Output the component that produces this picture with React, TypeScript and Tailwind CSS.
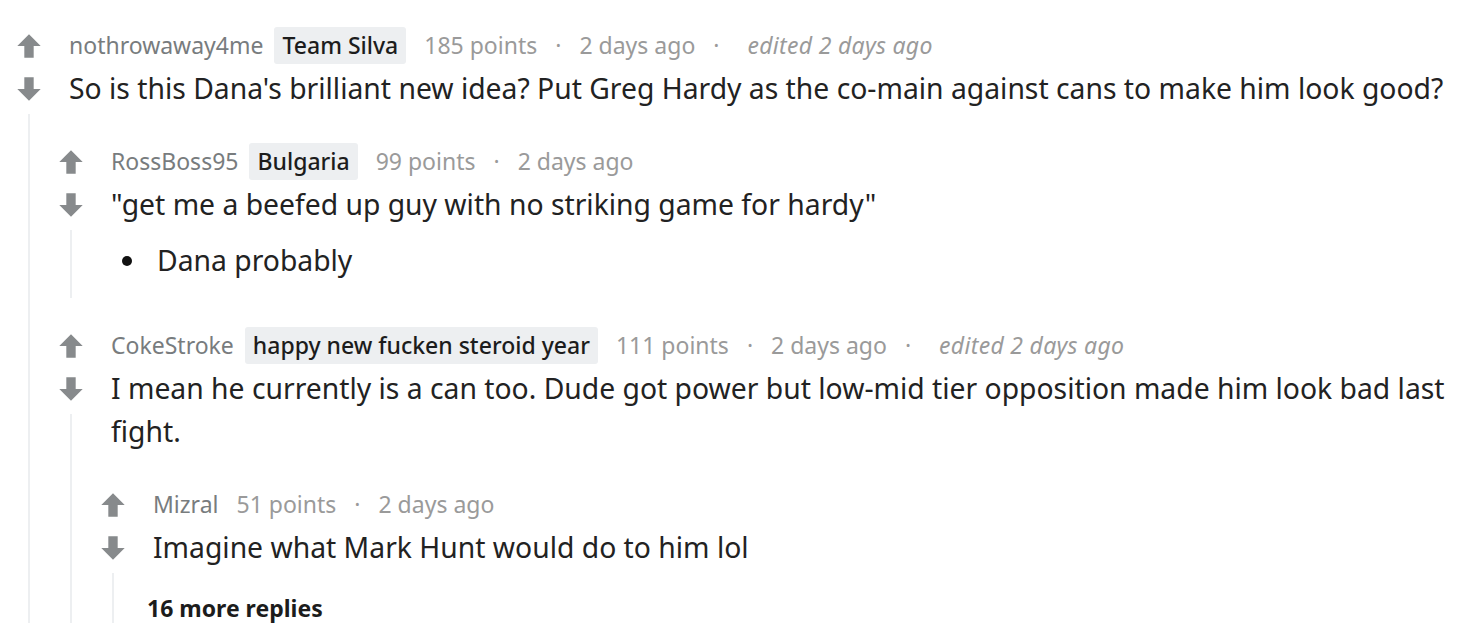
import React from 'react'

interface CommentData {
  author: string
  flair?: string
  points: string
  age: string
  edited?: string
  body: React.ReactNode
  children?: CommentData[]
  more?: string
}

function UpArrow(): React.JSX.Element {
  return (
    <svg width="26" height="26" viewBox="0 0 20 20" className="fill-[#878a8c]">
      <path d="M10 1 L19 10 H13.6 V19 H6.4 V10 H1 Z" />
    </svg>
  )
}

function DownArrow(): React.JSX.Element {
  return (
    <svg width="26" height="26" viewBox="0 0 20 20" className="fill-[#878a8c]">
      <path d="M10 19 L19 10 H13.6 V1 H6.4 V10 H1 Z" />
    </svg>
  )
}

function Meta({ c }: { c: CommentData }): React.JSX.Element {
  return (
    <div className="flex h-[43px] items-center whitespace-nowrap text-[23px] text-[#9a9a9a]">
      <span className="text-[#787c7e]">{c.author}</span>
      {c.flair && (
        <span className="ml-[11px] rounded-[3px] bg-[#edeff1] px-[8px] py-[1px] font-medium text-[#1c1c1c]">
          {c.flair}
        </span>
      )}
      <span className="ml-[18px]">{c.points}</span>
      <span className="mx-[18px]">·</span>
      <span>{c.age}</span>
      {c.edited && (
        <>
          <span className="mx-[18px]">·</span>
          <span className="ml-[10px] italic tracking-[0.3px]">{c.edited}</span>
        </>
      )}
    </div>
  )
}

function Comment({ c }: { c: CommentData }): React.JSX.Element {
  return (
    <div className="flex">
      <div className="flex w-[42px] shrink-0 flex-col items-center">
        <div className="flex h-[43px] items-center">
          <UpArrow />
        </div>
        <div className="flex h-[43px] items-center">
          <DownArrow />
        </div>
        <div className="mt-[4px] w-[2px] flex-1 bg-[#edeff1]" />
      </div>
      <div className="min-w-0 flex-1">
        <div className="pl-[19px]">
          <Meta c={c} />
          <div className="pb-[4px] text-[28.3px] leading-[43px] text-[#222222]">{c.body}</div>
        </div>
        {c.children?.map((child, i) => (
          <div key={i} className="pt-[26px]">
            <Comment c={child} />
          </div>
        ))}
        {c.more && (
          <div className="pl-[13px] pt-[20px] text-[23px] font-bold leading-[30px] text-[#1c1c1c]">
            {c.more}
          </div>
        )}
      </div>
    </div>
  )
}

const thread: CommentData = {
  author: 'nothrowaway4me',
  flair: 'Team Silva',
  points: '185 points',
  age: '2 days ago',
  edited: 'edited 2 days ago',
  body: (
    <p>So is this Dana's brilliant new idea? Put Greg Hardy as the co-main against cans to make him look good?</p>
  ),
  children: [
    {
      author: 'RossBoss95',
      flair: 'Bulgaria',
      points: '99 points',
      age: '2 days ago',
      body: (
        <>
          <p>"get me a beefed up guy with no striking game for hardy"</p>
          <ul className="mt-[13px] pb-[12px]">
            <li className="flex items-center">
              <span className="ml-[11px] mr-[25px] h-[10px] w-[10px] rounded-full bg-[#111]" />
              Dana probably
            </li>
          </ul>
        </>
      ),
    },
    {
      author: 'CokeStroke',
      flair: 'happy new fucken steroid year',
      points: '111 points',
      age: '2 days ago',
      edited: 'edited 2 days ago',
      body: (
        <p>
          I mean he currently is a can too. Dude got power but low-mid tier opposition made him look bad last fight.
        </p>
      ),
      children: [
        {
          author: 'Mizral',
          points: '51 points',
          age: '2 days ago',
          body: <p>Imagine what Mark Hunt would do to him lol</p>,
          more: '16 more replies',
        },
      ],
    },
  ],
}

export default function App(): React.JSX.Element {
  return (
    <div
      className="h-[627px] w-[1460px] overflow-hidden bg-white pl-[8px] pr-[8px] pt-[24px]"
      style={{ fontFamily: '"Noto Sans", "Open Sans", sans-serif' }}
    >
      <Comment c={thread} />
    </div>
  )
}
